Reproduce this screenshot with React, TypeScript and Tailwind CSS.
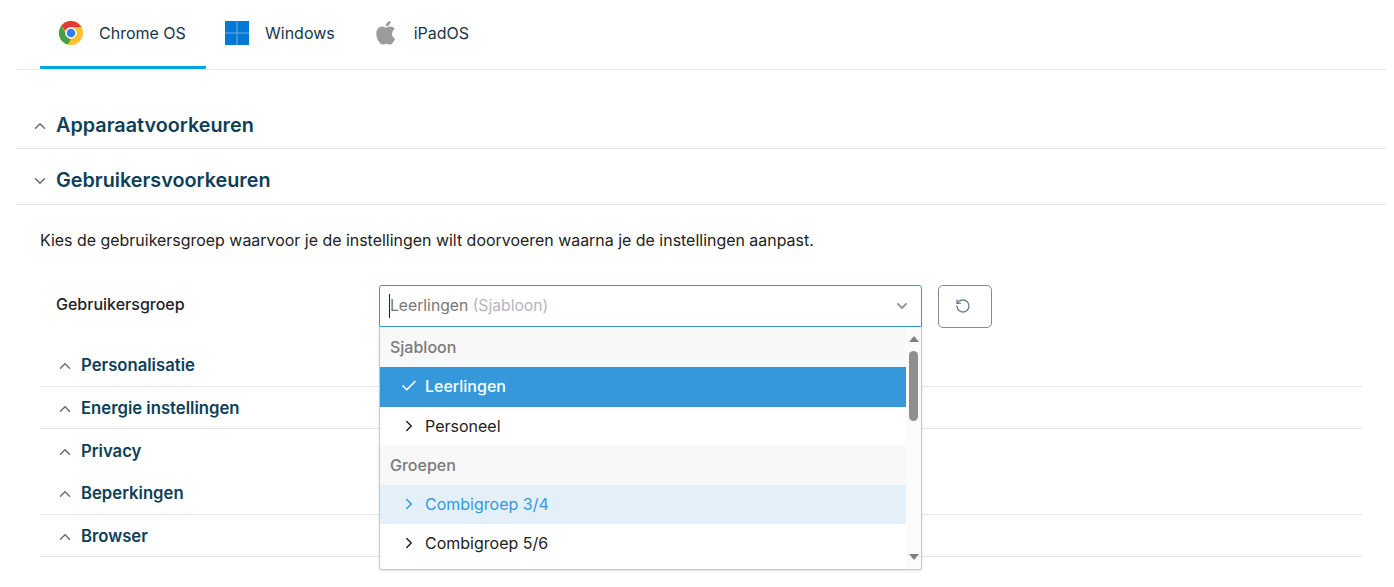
import { Check, ChevronDown, ChevronRight, ChevronUp, RotateCcw } from "lucide-react";

const FONT = "font-['Inter','Noto_Sans',sans-serif]";

function ChromeIcon() {
  return (
    <svg viewBox="0 0 48 48" className="w-6 h-6">
      <circle cx="24" cy="24" r="24" fill="#fbc02d" />
      <path d="M24 0a24 24 0 0 1 20.8 12H24a12 12 0 0 0-11.2 7.6L4.6 9.6A24 24 0 0 1 24 0z" fill="#e53935" />
      <path d="M4.6 9.6l9 15.6A12 12 0 0 0 24 36l-6.4 11.1A24 24 0 0 1 4.6 9.6z" fill="#43a047" />
      <circle cx="24" cy="24" r="11.5" fill="#fff" />
      <circle cx="24" cy="24" r="8.5" fill="#2f7df0" />
    </svg>
  );
}

function WindowsIcon() {
  return (
    <svg viewBox="0 0 24 24" className="w-6 h-6">
      <rect width="24" height="24" fill="#6db1e6" />
      <path d="M0 0h11.5v11.5H0zM12.5 0H24v11.5H12.5zM0 12.5h11.5V24H0zM12.5 12.5H24V24H12.5z" fill="#0078d4" />
    </svg>
  );
}

function AppleIcon() {
  return (
    <svg viewBox="0 0 24 24" className="w-6 h-6">
      <path
        transform="translate(-2.4 -2.9) scale(1.2)"
        d="M17.2 12.7c0-2.4 2-3.6 2.100-3.700-1.100-1.700-2.900-1.900-3.600-1.900-1.500-.2-3 .9-3.700.9-.8 0-2-.9-3.200-.9-1.700 0-3.200 1-4.100 2.500-1.700 3-.4 7.500 1.300 10 .8 1.200 1.800 2.500 3 2.500 1.200-.1 1.700-.8 3.100-.8s1.900.8 3.200.8 2.100-1.200 2.900-2.400c.9-1.400 1.300-2.700 1.300-2.800-.1 0-2.500-1-2.500-3.900zM14.800 5.500c.7-.8 1.100-1.900 1-3.100-1 0-2.200.7-2.900 1.500-.6.7-1.200 1.900-1 3 1.100.1 2.200-.6 2.900-1.400z"
        fill="#9b9b9b"
      />
    </svg>
  );
}

function Tab({ icon, label, active }: { icon: React.ReactNode; label: string; active?: boolean }) {
  return (
    <div
      className={
        active
          ? "h-[69px] w-[166px] flex items-center gap-4 pl-[19px] border-b-[3px] border-[#00a3e8] rounded-b-[1px]"
          : "h-[69px] flex items-center gap-4 pl-[19px] pb-[3px] pr-[20px]"
      }
    >
      {icon}
      <span className="text-base text-[#16374d] pb-[1px]">{label}</span>
    </div>
  );
}

function SubRow({ label, border = true }: { label: string; border?: boolean }) {
  return (
    <div
      className={
        border
          ? "h-[42.7px] pt-[2px] flex items-center gap-[7px] pl-[16px] border-b border-[#e4e4e4]"
          : "h-[42.7px] pt-[2px] flex items-center gap-[7px] pl-[16px]"
      }
    >
      <ChevronUp className="w-[18px] h-[18px] text-[#6b6b78]" strokeWidth={2} />
      <span className="text-[16.7px] font-semibold text-[#0f3f58]">{label}</span>
    </div>
  );
}

function Option({ label, kind }: { label: string; kind: "selected" | "hover" | "plain" }) {
  const rowClass =
    kind === "selected"
      ? "h-[40px] pb-[2px] flex items-center gap-[7px] pl-[20px] bg-[#3498db] text-white font-medium"
      : kind === "hover"
        ? "h-[39px] pb-[2px] flex items-center gap-[7px] pl-[20px] bg-[#e3f0fa] text-[#3498db]"
        : "h-[39px] pb-[2px] flex items-center gap-[7px] pl-[20px] text-[#222]";
  return (
    <div className={rowClass}>
      {kind === "selected" ? (
        <Check className="w-[18px] h-[18px]" strokeWidth={2.2} />
      ) : (
        <ChevronRight className="w-[18px] h-[18px]" strokeWidth={2} />
      )}
      <span className="text-base">{label}</span>
    </div>
  );
}

function GroupLabel({ label, tall }: { label: string; tall?: boolean }) {
  return (
    <div
      className={
        tall
          ? "h-[40px] flex items-center pl-[10px] bg-[#f8f8f8] text-base font-medium text-[#7a7a7a]"
          : "h-[39px] pb-[2px] flex items-center pl-[10px] bg-[#f8f8f8] text-base font-medium text-[#7a7a7a]"
      }
    >
      {label}
    </div>
  );
}

export default function App() {
  return (
    <div className={`${FONT} w-[1394px] h-[587px] overflow-hidden bg-white pl-4 pr-2`}>
      {/* Tabs */}
      <div className="h-[70px] flex pl-6 border-b border-[#e8e8ec]">
        <Tab icon={<ChromeIcon />} label="Chrome OS" active />
        <Tab icon={<WindowsIcon />} label="Windows" />
        <Tab icon={<AppleIcon />} label="iPadOS" />
      </div>

      {/* Accordion */}
      <div className="mt-[24px] h-[55px] pt-[10px] flex items-center gap-[7px] pl-[15px] border-b border-[#e4e4e4]">
        <ChevronUp className="w-[18px] h-[18px] text-[#6b6b78]" strokeWidth={2} />
        <span className="text-[19.8px] font-semibold text-[#0f3f58]">Apparaatvoorkeuren</span>
      </div>
      <div className="h-[56px] pt-2 flex items-center gap-[7px] pl-[15px] border-b border-[#e4e4e4]">
        <ChevronDown className="w-[18px] h-[18px] text-[#6b6b78]" strokeWidth={2} />
        <span className="text-[19.8px] font-semibold text-[#0f3f58]">Gebruikersvoorkeuren</span>
      </div>

      <div className="px-6">
        <p className="mt-[25px] h-[22px] leading-[22px] text-[15.95px] text-[#222]">
          Kies de gebruikersgroep waarvoor je de instellingen wilt doorvoeren waarna je de instellingen aanpast.
        </p>

        {/* Group select */}
        <div className="relative mt-[33px] flex items-center h-[42px]">
          <span className="w-[339px] pl-4 pb-[4px] text-base font-medium text-[#222]">Gebruikersgroep</span>
          <div className="w-[543px] h-[42px] flex items-center justify-between pl-[10px] pr-[11px] bg-white border border-[#3498db] rounded-t-[3px]">
            <span className="text-[15.7px] text-[#777] border-l border-[#222] -ml-px">
              Leerlingen <span className="text-[#b5b5bd]">(Sjabloon)</span>
            </span>
            <ChevronDown className="w-4 h-4 text-[#999]" strokeWidth={3} />
          </div>
          <button className="ml-[16px] w-[54px] h-[43px] flex items-center justify-center pr-[4px] border border-[#8a8a8a] rounded-[5px]">
            <RotateCcw className="w-4 h-4 text-[#6f7f90]" />
          </button>

          {/* Open dropdown list */}
          <div className="absolute left-[339px] top-[42px] w-[543px] h-[243px] flex bg-white border-x border-b border-[#c8c8c8] rounded-b-[3px] shadow-sm overflow-hidden">
            <div className="flex-1">
              <GroupLabel label="Sjabloon" tall />
              <Option label="Leerlingen" kind="selected" />
              <Option label="Personeel" kind="plain" />
              <GroupLabel label="Groepen" />
              <Option label="Combigroep 3/4" kind="hover" />
              <Option label="Combigroep 5/6" kind="plain" />
            </div>
            <div className="w-[15px] bg-[#fbfbfb] flex flex-col items-center justify-between pt-[9px] pb-[9px]">
              <div className="flex flex-col items-center gap-[9px]">
                <div className="w-0 h-0 border-x-[5px] border-x-transparent border-b-[6px] border-b-[#808080]" />
                <div className="w-[9px] h-[70px] rounded-full bg-[#8f8f8f]" />
              </div>
              <div className="w-0 h-0 border-x-[5px] border-x-transparent border-t-[6px] border-t-[#808080]" />
            </div>
          </div>
        </div>

        {/* Sub sections */}
        <div className="mt-[17px]">
          <SubRow label="Personalisatie" />
          <SubRow label="Energie instellingen" />
          <SubRow label="Privacy" border={false} />
          <SubRow label="Beperkingen" />
          <SubRow label="Browser" />
        </div>
      </div>
    </div>
  );
}
